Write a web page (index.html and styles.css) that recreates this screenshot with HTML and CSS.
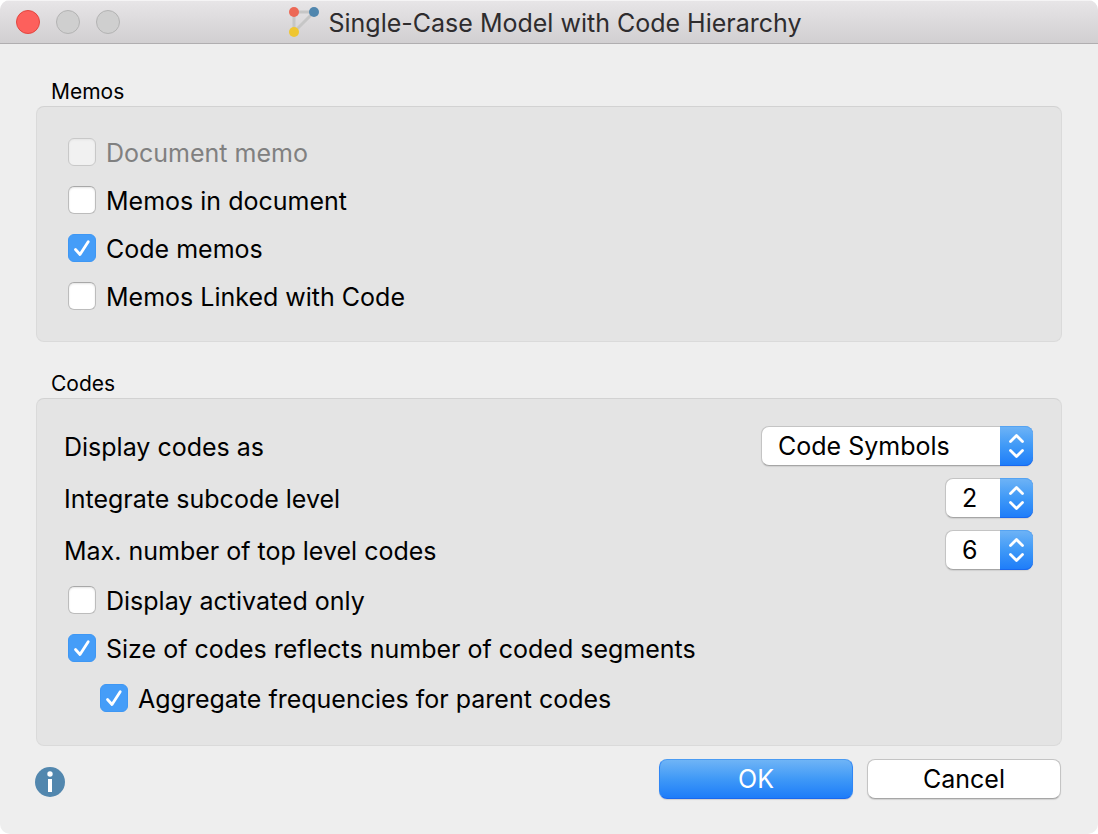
FILE: index.html
```
<!DOCTYPE html>
<html lang="en">
<head>
<meta charset="utf-8">
<title>Single-Case Model with Code Hierarchy</title>
<link rel="stylesheet" href="styles.css">
</head>
<body>
<svg class="defs" aria-hidden="true">
  <symbol id="tick" viewBox="0 0 28 28"><path d="M7.500 15.500 12 20.500 20.200 7.800" fill="none" stroke="#fff" stroke-width="2.800" stroke-linecap="round" stroke-linejoin="round"/></symbol>
  <symbol id="chevrons" viewBox="0 0 33 40"><path d="M10.500 15.500 16.500 9.500 22.500 15.500M10.500 24.500 16.500 30.500 22.500 24.500" fill="none" stroke="#fff" stroke-width="2.800" stroke-linecap="round" stroke-linejoin="round"/></symbol>
</svg>
<main class="window">
  <header class="titlebar">
    <div class="lights">
      <button class="light close" type="button" aria-label="Close"></button>
      <button class="light" type="button" aria-label="Minimize" disabled></button>
      <button class="light" type="button" aria-label="Zoom" disabled></button>
    </div>
    <h1 class="title">
      <svg class="model-icon" viewBox="0 0 32 32" aria-hidden="true">
        <path d="M6 6H26L6 26Z" fill="none" stroke="#c6c6c6" stroke-width="3"/>
        <circle cx="6" cy="6" r="5" fill="#ec6856"/>
        <circle cx="26" cy="6" r="5" fill="#5086ae"/>
        <circle cx="6" cy="26" r="5" fill="#efc631"/>
      </svg>
      <span class="title-text">Single-Case Model with Code Hierarchy</span>
    </h1>
  </header>
  <form class="content">
    <section class="group">
      <h2 class="group-title">Memos</h2>
      <div class="panel memos">
        <label class="check disabled"><span class="box"><input type="checkbox" disabled><svg class="tick" aria-hidden="true"><use href="#tick"/></svg></span>Document memo</label>
        <label class="check"><span class="box"><input type="checkbox"><svg class="tick" aria-hidden="true"><use href="#tick"/></svg></span>Memos in document</label>
        <label class="check"><span class="box"><input type="checkbox" checked><svg class="tick" aria-hidden="true"><use href="#tick"/></svg></span>Code memos</label>
        <label class="check"><span class="box"><input type="checkbox"><svg class="tick" aria-hidden="true"><use href="#tick"/></svg></span>Memos Linked with Code</label>
      </div>
    </section>
    <section class="group">
      <h2 class="group-title">Codes</h2>
      <div class="panel codes">
        <div class="fields">
          <div class="field">
            <label for="display">Display codes as</label>
            <span class="popup wide"><select id="display"><option>Code Symbols</option></select><svg class="stepper" aria-hidden="true"><use href="#chevrons"/></svg></span>
          </div>
          <div class="field">
            <label for="level">Integrate subcode level</label>
            <span class="popup"><select id="level"><option>2</option></select><svg class="stepper" aria-hidden="true"><use href="#chevrons"/></svg></span>
          </div>
          <div class="field">
            <label for="maximum">Max. number of top level codes</label>
            <span class="popup"><select id="maximum"><option>6</option></select><svg class="stepper" aria-hidden="true"><use href="#chevrons"/></svg></span>
          </div>
        </div>
        <label class="check"><span class="box"><input type="checkbox"><svg class="tick" aria-hidden="true"><use href="#tick"/></svg></span>Display activated only</label>
        <label class="check"><span class="box"><input type="checkbox" checked><svg class="tick" aria-hidden="true"><use href="#tick"/></svg></span>Size of codes reflects number of coded segments</label>
        <label class="check nested"><span class="box"><input type="checkbox" checked><svg class="tick" aria-hidden="true"><use href="#tick"/></svg></span>Aggregate frequencies for parent codes</label>
      </div>
    </section>
    <footer class="actions">
      <button class="info" type="button" aria-label="Information">
        <svg viewBox="0 0 30 30" aria-hidden="true"><circle cx="15" cy="15" r="15" fill="#5287ae"/><circle cx="15" cy="7" r="2.700" fill="#fff"/><path d="M13 12h4v13h-4z" fill="#fff"/></svg>
      </button>
      <button class="button primary" type="submit">OK</button>
      <button class="button" type="button">Cancel</button>
    </footer>
  </form>
</main>
</body>
</html>
```
FILE: styles.css
```
* {
  box-sizing: border-box;
}

body {
  margin: 0;
  background: #fff;
  color: #000;
  font: 25px/28px Inter, "Liberation Sans", sans-serif;
}

.defs {
  display: none;
}

.window {
  display: flex;
  flex-direction: column;
  min-height: 100vh;
  overflow: hidden;
  border-radius: 10px;
  background: #eee;
}

.titlebar {
  display: grid;
  grid-template-columns: 1fr auto 1fr;
  align-items: center;
  height: 44px;
  padding: 0 16px;
  border-top: 1px solid #f5f4f5;
  border-bottom: 1px solid #b0aeb0;
  background: linear-gradient(#e7e5e7, #d1cfd1);
}

.lights {
  display: flex;
  gap: 16px;
}

.light {
  width: 24px;
  height: 24px;
  padding: 0;
  border: 1px solid #b3b3b3;
  border-radius: 50%;
  background: #cfcfcf;
}

.close {
  border-color: #e2463f;
  background: #fd605c;
}

.title {
  display: flex;
  align-items: center;
  gap: 8px;
  margin: 0;
  padding-right: 8px;
  color: #2e2c2e;
  font-size: 25px;
  font-weight: 400;
}

.title-text {
  padding-top: 2px;
}

.model-icon {
  width: 32px;
  height: 32px;
}

.content {
  display: flex;
  flex-direction: column;
  padding: 34px 36px;
}

.group + .group {
  margin-top: 28px;
}

.group-title {
  margin: 0;
  padding: 0 15px;
  font-size: 21px;
  font-weight: 400;
  line-height: 28px;
}

.panel {
  display: flex;
  flex-direction: column;
  gap: 20px;
  border: 1px solid #dadada;
  border-top-color: #d2d2d2;
  border-radius: 8px;
  background: #e4e4e4;
}

.memos {
  padding: 31px;
}

.codes {
  padding: 27px 28px 33px 27px;
}

.codes .check {
  padding-left: 4px;
}

.codes .nested {
  margin-top: 2px;
  padding-left: 36px;
}

.fields {
  display: flex;
  flex-direction: column;
  gap: 12px;
  margin-bottom: -4px;
}

.field {
  display: flex;
  align-items: center;
  justify-content: space-between;
}

.field label {
  padding-top: 2px;
}

.check {
  display: flex;
  align-items: flex-start;
  gap: 10px;
  height: 28px;
  line-height: 30px;
}

.disabled {
  color: #808080;
}

.box {
  display: grid;
}

.box input {
  grid-area: 1 / 1;
  width: 28px;
  height: 28px;
  margin: 0;
  appearance: none;
  border: 1px solid #bcbcbc;
  border-top-color: #a8a8a8;
  border-radius: 6px;
  background: #fff;
  box-shadow: inset 0 1px 2px #e4e4e4;
}

.box input:disabled {
  border-color: #c8c8c8;
  background: #f1f1f1;
}

.box input:checked {
  border-color: #3e97f4;
  background: #459df8;
  box-shadow: none;
}

.tick {
  grid-area: 1 / 1;
  width: 28px;
  height: 28px;
  pointer-events: none;
  visibility: hidden;
}

.box input:checked + .tick {
  visibility: visible;
}

.popup {
  display: grid;
  width: 88px;
  height: 40px;
}

.wide {
  width: 272px;
}

.popup select {
  grid-area: 1 / 1;
  width: 100%;
  height: 40px;
  padding: 0 34px 0 16px;
  appearance: none;
  border: 1px solid #c4c4c4;
  border-bottom-color: #a6a6a6;
  border-radius: 8px;
  background: #fff;
  box-shadow: 0 1px 1px #d0d0d0;
  color: #000;
  font: inherit;
}

.stepper {
  grid-area: 1 / 1;
  justify-self: end;
  width: 33px;
  height: 40px;
  border-radius: 0 8px 8px 0;
  background: linear-gradient(#6fb4f6, #3f99f7 50%, #1d7cf9);
  box-shadow: inset 0 -1px #1a68ee, inset 0 1px #55a3f2;
  pointer-events: none;
}

.actions {
  display: flex;
  align-items: flex-start;
  gap: 14px;
  margin-top: 13px;
  padding-right: 1px;
}

.info {
  width: 30px;
  height: 30px;
  margin: 8px auto 0 -1px;
  padding: 0;
  border: 0;
  background: none;
}

.info svg {
  display: block;
}

.button {
  width: 194px;
  height: 40px;
  padding: 0;
  border: 1px solid #c4c4c4;
  border-bottom-color: #a6a6a6;
  border-radius: 8px;
  background: #fff;
  box-shadow: 0 1px 1px #d0d0d0;
  color: #000;
  font: inherit;
}

.primary {
  border-color: #4a9bf2 #2f86f5 #1a68ee;
  background: linear-gradient(#6fb4f6, #3f99f7 50%, #1d7cf9);
  color: #fff;
}
```
